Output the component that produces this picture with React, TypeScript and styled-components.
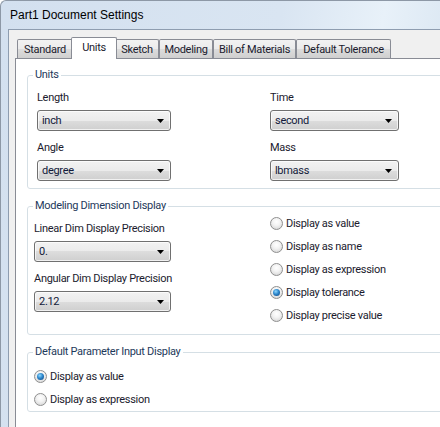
import styled, { createGlobalStyle } from "styled-components";

const GlobalStyle = createGlobalStyle`
  html, body {
    margin: 0;
    padding: 0;
    background: #ffffff;
  }
  body {
    font-family: Roboto, "Liberation Sans", Arial, sans-serif;
    font-size: 11px;
    letter-spacing: -0.3px;
    color: #1b1b2e;
  }
`;

// widths read off the dialog, the selected tab overlaps its neighbours by 2px
const tabs = [
  { label: "Standard", width: 56 },
  { label: "Units", width: 46 },
  { label: "Sketch", width: 44 },
  { label: "Modeling", width: 54 },
  { label: "Bill of Materials", width: 83 },
  { label: "Default Tolerance", width: 95 },
];

const dimOptions = [
  { label: "Display as value", checked: false },
  { label: "Display as name", checked: false },
  { label: "Display as expression", checked: false },
  { label: "Display tolerance", checked: true },
  { label: "Display precise value", checked: false },
];

const Combo = ({ value, width }: { value: string; width: number }) => (
  <ComboBox $width={width}>
    <span>{value}</span>
    <svg width="7" height="4" viewBox="0 0 7 4">
      <path d="M0 0H7L3.5 4Z" fill="#000" />
    </svg>
  </ComboBox>
);

const Radio = ({ label, checked }: { label: string; checked: boolean }) => (
  <RadioRow>
    <RadioDot $checked={checked} />
    <span>{label}</span>
  </RadioRow>
);

const App = () => {
  return (
    <>
      <GlobalStyle />
      <Window>
        <TitleBar>Part1 Document Settings</TitleBar>
        <Client>
          <TabStrip>
            {tabs.map((t) => (
              <Tab key={t.label} $active={t.label === "Units"} $width={t.width}>
                {t.label}
              </Tab>
            ))}
          </TabStrip>
          <Panel>
            <Group $top={9} $bottom={7} $gap={0}>
              <Legend>Units</Legend>
              <UnitsGrid>
                <Field>
                  <Label>Length</Label>
                  <Combo value="inch" width={134} />
                </Field>
                <Field>
                  <Label>Time</Label>
                  <Combo value="second" width={129} />
                </Field>
                <Field>
                  <Label>Angle</Label>
                  <Combo value="degree" width={134} />
                </Field>
                <Field>
                  <Label>Mass</Label>
                  <Combo value="lbmass" width={129} />
                </Field>
              </UnitsGrid>
            </Group>
            <Group $top={3} $bottom={12} $gap={10}>
              <Legend>Modeling Dimension Display</Legend>
              <DimRow>
                <DimFields>
                  <Field>
                    <Label>Linear Dim Display Precision</Label>
                    <Combo value="0." width={137} />
                  </Field>
                  <Field>
                    <Label>Angular Dim Display Precision</Label>
                    <Combo value="2.12" width={137} />
                  </Field>
                </DimFields>
                <RadioList $top={1}>
                  {dimOptions.map((o) => (
                    <Radio key={o.label} label={o.label} checked={o.checked} />
                  ))}
                </RadioList>
              </DimRow>
            </Group>
            <Group $top={11} $bottom={5} $gap={10}>
              <Legend>Default Parameter Input Display</Legend>
              <RadioList $top={0} $indent={6}>
                <Radio label="Display as value" checked />
                <Radio label="Display as expression" checked={false} />
              </RadioList>
            </Group>
          </Panel>
        </Client>
      </Window>
    </>
  );
};

export default App;

const Window = styled.div`
  width: 440px;
  height: 427px;
  box-sizing: border-box;
  overflow: hidden;
  display: flex;
  flex-direction: column;
  border-top: 1px solid #8d98a6;
  border-left: 1px solid #8d98a6;
  border-top-left-radius: 6px;
  background: linear-gradient(
    100deg,
    #d3e0ef 0%,
    #d9e5f2 55%,
    #e8f1f9 75%,
    #dce8f3 88%,
    #edf5fb 100%
  );
`;

const TitleBar = styled.div`
  height: 28px;
  flex: none;
  display: flex;
  align-items: center;
  padding-left: 9px;
  font-family: "Liberation Sans", Arial, sans-serif;
  font-size: 12px;
  letter-spacing: 0;
  color: #000000;
`;

const Client = styled.div`
  flex: none;
  height: 420px;
  margin-left: 7px;
  border-top: 1px solid #8e9db0;
  border-left: 1px solid #8e9db0;
  background: #f0f0f0;
  padding: 7px 0 0 6px;
  display: flex;
  flex-direction: column;
`;

const TabStrip = styled.div`
  display: flex;
  align-items: flex-end;
  height: 21px;
  padding-left: 2px;
`;

const Tab = styled.div<{ $active: boolean; $width: number }>`
  box-sizing: border-box;
  flex: none;
  width: ${(p) => p.$width}px;
  display: flex;
  align-items: center;
  justify-content: center;
  border: 1px solid #898c95;
  border-bottom: none;
  border-radius: 2px 2px 0 0;
  height: ${(p) => (p.$active ? "22px" : "19px")};
  margin: ${(p) => (p.$active ? "0 -2px -1px -2px" : "0")};
  padding-bottom: ${(p) => (p.$active ? "3px" : "0")};
  background: ${(p) =>
    p.$active
      ? "#ffffff"
      : "linear-gradient(#f2f2f2 0%, #ebebeb 50%, #dddddd 50%, #cfcfcf 100%)"};
  position: relative;
  z-index: ${(p) => (p.$active ? 1 : 0)};
  white-space: nowrap;
`;

const Panel = styled.div`
  flex: 1;
  width: 470px;
  background: #ffffff;
  border: 1px solid #898c95;
  padding: 9px 0 0 11px;
  display: flex;
  flex-direction: column;
`;

const Group = styled.fieldset<{ $top: number; $bottom: number; $gap: number }>`
  margin: ${(p) => p.$gap}px 0 0 0;
  border: 1px solid #d5dfe5;
  border-radius: 3px;
  padding: ${(p) => `${p.$top}px 0 ${p.$bottom}px 0`};
  min-width: 0;
`;

const Legend = styled.legend`
  padding: 0 2px;
  margin-left: 5px;
  color: #1e395b;
  line-height: 14px;
`;

const UnitsGrid = styled.div`
  display: grid;
  grid-template-columns: 233px 1fr;
  row-gap: 10px;
  padding-left: 9px;
`;

const Field = styled.div`
  display: flex;
  flex-direction: column;
  gap: 5px;
`;

const Label = styled.div`
  line-height: 14px;
`;

const ComboBox = styled.div<{ $width: number }>`
  box-sizing: border-box;
  width: ${(p) => p.$width}px;
  height: 21px;
  border: 1px solid #707070;
  border-radius: 3px;
  box-shadow: inset 0 0 0 1px rgba(255, 255, 255, 0.7);
  background: linear-gradient(#f2f2f2 0%, #ebebeb 50%, #dddddd 50%, #cfcfcf 100%);
  display: flex;
  align-items: center;
  justify-content: space-between;
  padding: 0 6px 0 4px;
  color: #121a3a;
`;

const DimRow = styled.div`
  display: grid;
  grid-template-columns: 236px 1fr;
  padding-left: 6px;
`;

const DimFields = styled.div`
  display: flex;
  flex-direction: column;
  gap: 10px;
  padding-top: 6px;
`;

const RadioList = styled.div<{ $top: number; $indent?: number }>`
  display: flex;
  flex-direction: column;
  gap: 10px;
  padding-top: ${(p) => p.$top}px;
  padding-left: ${(p) => p.$indent ?? 0}px;
`;

const RadioRow = styled.div`
  display: flex;
  align-items: center;
  gap: 3px;
  line-height: 13px;
`;

const RadioDot = styled.span<{ $checked: boolean }>`
  box-sizing: border-box;
  width: 13px;
  height: 13px;
  border-radius: 50%;
  border: 1px solid #8f8f8f;
  background: radial-gradient(circle at 50% 35%, #ffffff 0%, #f3f3f3 40%, #cfcfcf 100%);
  display: flex;
  align-items: center;
  justify-content: center;
  &::after {
    content: "";
    display: ${(p) => (p.$checked ? "block" : "none")};
    width: 7px;
    height: 7px;
    border-radius: 50%;
    background: radial-gradient(circle at 40% 35%, #8fd8ff 0%, #2d87cc 45%, #0c3f78 100%);
  }
`;
